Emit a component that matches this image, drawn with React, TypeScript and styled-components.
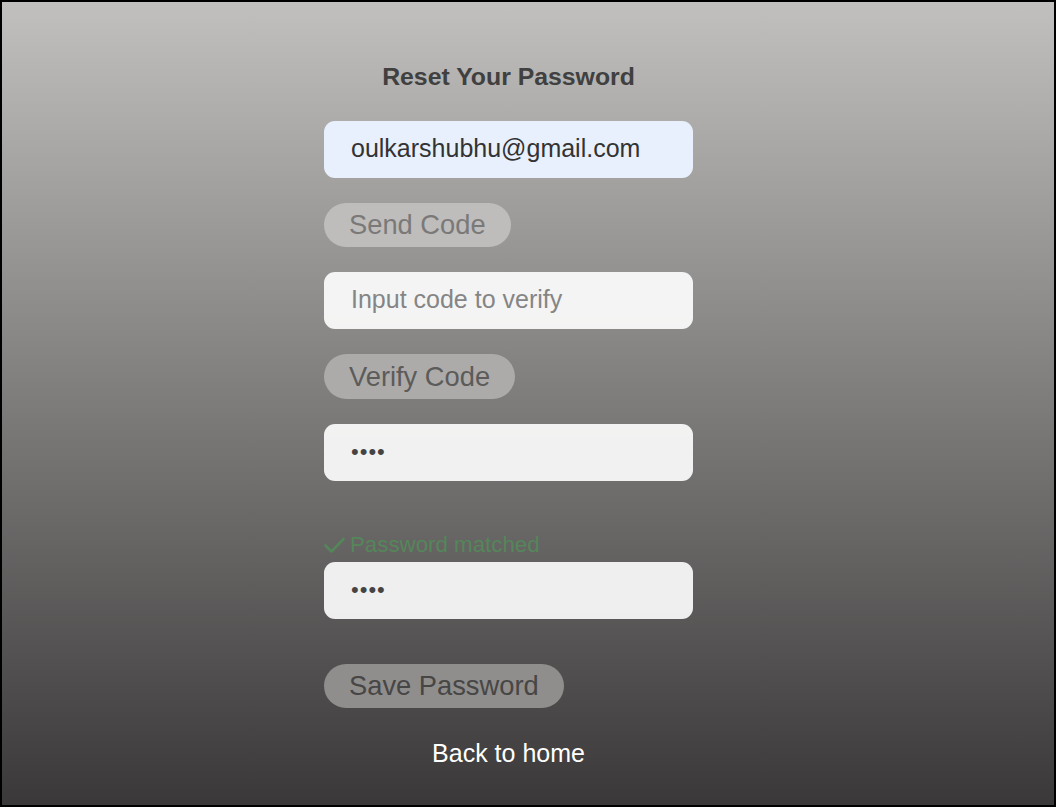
import React from "react";
import styled, { createGlobalStyle } from "styled-components";

const GlobalStyle = createGlobalStyle`
  html, body { margin: 0; padding: 0; }
  body { font-family: "Liberation Sans", Arial, sans-serif; }
  * { box-sizing: border-box; }
`;

const Page = styled.div`
  min-height: 807px;
  height: 807px;
  border: 2px solid #000;
  background: linear-gradient(to bottom, #c1c0be 0%, #3a3838 100%);
  padding: 61px 0 0 322px;
`;

const Column = styled.div`
  width: 369px;
  display: flex;
  flex-direction: column;
  align-items: flex-start;
`;

const Title = styled.h1`
  align-self: stretch;
  margin: 0;
  text-align: center;
  font-size: 24.8px;
  line-height: 28px;
  font-weight: 700;
  color: #404040;
`;

const Field = styled.input<{ $mt: number; $autofill?: boolean }>`
  margin-top: ${(p) => p.$mt}px;
  width: 369px;
  height: 57px;
  border: none;
  outline: none;
  border-radius: 11px;
  padding: 0 27px 2px;
  font-family: "Liberation Sans", Arial, sans-serif;
  font-size: 25px;
  color: #333;
  background: ${(p) => (p.$autofill ? "#e8f0fe" : "rgba(255,255,255,0.9)")};
  &::placeholder { color: #858585; }
  &[type="password"] { letter-spacing: 1px; font-size: 22px; color: #444; }
`;

const PillButton = styled.button<{ $mt: number; $bg: string; $fg: string; $h?: number }>`
  margin-top: ${(p) => p.$mt}px;
  height: ${(p) => p.$h ?? 44}px;
  padding: 0 25px;
  border: none;
  border-radius: 23px;
  background: ${(p) => p.$bg};
  color: ${(p) => p.$fg};
  font-family: "Liberation Sans", Arial, sans-serif;
  font-size: 27.3px;
  line-height: ${(p) => p.$h ?? 44}px;
  cursor: pointer;
`;

const Matched = styled.div`
  margin-top: 51px;
  display: flex;
  align-items: center;
  gap: 5px;
  font-size: 22.3px;
  line-height: 25px;
  color: #55865a;
`;

const BackLink = styled.a`
  margin-top: 31px;
  align-self: stretch;
  text-align: center;
  font-size: 25px;
  line-height: 29px;
  color: #fff;
  text-decoration: none;
  cursor: pointer;
`;

const Check = () => (
  <svg width="21" height="18" viewBox="0 0 21 18" fill="none">
    <polyline
      points="1.5,9.5 7.5,15.5 19.5,3"
      stroke="#55865a"
      strokeWidth="2.6"
      strokeLinecap="round"
      strokeLinejoin="round"
    />
  </svg>
);

export default function App() {
  return (
    <>
      <GlobalStyle />
      <Page>
        <Column>
          <Title>Reset Your Password</Title>
          <Field $mt={30} $autofill type="email" defaultValue="oulkarshubhu@gmail.com" />
          <PillButton $mt={25} $bg="#bebdbc" $fg="#7a7978">Send Code</PillButton>
          <Field $mt={25} type="text" placeholder="Input code to verify" />
          <PillButton $mt={25} $h={45} $bg="#acabaa" $fg="#5c5b5a">Verify Code</PillButton>
          <Field $mt={25} type="password" defaultValue="1234" />
          <Matched>
            <Check />
            <span>Password matched</span>
          </Matched>
          <Field $mt={5} type="password" defaultValue="1234" />
          <PillButton $mt={45} $bg="#8f8e8d" $fg="#474645">Save Password</PillButton>
          <BackLink>Back to home</BackLink>
        </Column>
      </Page>
    </>
  );
}
